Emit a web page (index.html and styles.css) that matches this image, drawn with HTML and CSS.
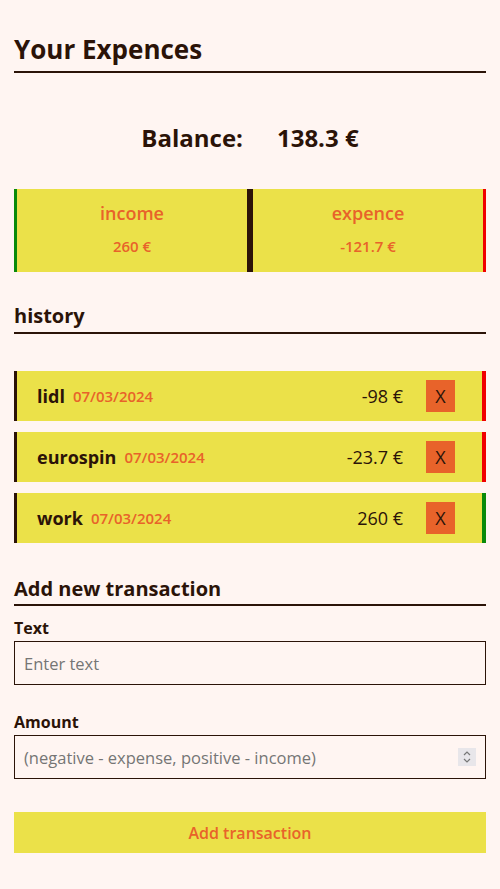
FILE: index.html
```html
<!DOCTYPE html>
<html>
<head>
<meta charset="utf-8">
<link rel="stylesheet" href="styles.css">
</head>
<body>
<div class="app">
  <h1 class="title">Your Expences</h1>
  <div class="balance"><span>Balance:</span><span>138.3 €</span></div>
  <div class="summary">
    <div class="sum sum-income">
      <div class="sum-label">income</div>
      <div class="sum-value">260 €</div>
    </div>
    <div class="sum sum-expence">
      <div class="sum-label">expence</div>
      <div class="sum-value">-121.7 €</div>
    </div>
  </div>
  <h3 class="section">history</h3>
  <ul class="list">
    <li class="item minus">
      <span class="name">lidl</span><span class="date">07/03/2024</span>
      <span class="amount">-98 €</span><button class="del">X</button>
    </li>
    <li class="item minus">
      <span class="name">eurospin</span><span class="date">07/03/2024</span>
      <span class="amount">-23.7 €</span><button class="del">X</button>
    </li>
    <li class="item plus">
      <span class="name">work</span><span class="date">07/03/2024</span>
      <span class="amount">260 €</span><button class="del">X</button>
    </li>
  </ul>
  <h3 class="section add">Add new transaction</h3>
  <form class="form">
    <label class="label">Text</label>
    <input class="field" type="text" placeholder="Enter text">
    <label class="label">Amount</label>
    <div class="field num">
      <span class="ph">(negative - expense, positive - income)</span>
      <span class="spin"><svg width="10" height="16" viewBox="0 0 10 16"><path d="M2 6 L5 3 L8 6 M2 10 L5 13 L8 10" fill="none" stroke="#777" stroke-width="1.2"/></svg></span>
    </div>
    <button class="submit" type="button">Add transaction</button>
  </form>
</div>
</body>
</html>
```
FILE: styles.css
```css
* { box-sizing: border-box; }
body {
  margin: 0;
  background: #fff5f2;
  color: #2b1308;
  font-family: "Open Sans", "Noto Sans", sans-serif;
}
.app { padding: 0 14px 30px; }
.title {
  margin: 0;
  padding-top: 32px;
  font-size: 26px;
  font-weight: 700;
  line-height: 34px;
  border-bottom: 2px solid #2b1308;
  padding-bottom: 5px;
}
.balance {
  display: flex;
  justify-content: center;
  gap: 34px;
  font-size: 24px;
  font-weight: 700;
  margin-top: 50px;
  line-height: 30px;
}
.summary {
  display: flex;
  margin-top: 36px;
  height: 83px;
  background: #ebe149;
  border-left: 3px solid #0a8a0a;
  border-right: 3px solid #f00000;
}
.sum {
  flex: 1;
  display: flex;
  flex-direction: column;
  align-items: center;
  color: #e8632a;
  padding-top: 12px;
}
.sum-income { border-right: 6px solid #2b1308; }
.sum-label { font-size: 18px; font-weight: 600; line-height: 24px; }
.sum-value { font-size: 15px; font-weight: 600; margin-top: 11px; line-height: 20px; }
.section {
  margin: 0;
  font-size: 20px;
  font-weight: 700;
  line-height: 26px;
  border-bottom: 2px solid #2b1308;
  padding-bottom: 3px;
  margin-top: 31px;
}
.list { list-style: none; margin: 37px 0 0; padding: 0; display: flex; flex-direction: column; gap: 11px; }
.item {
  display: flex;
  align-items: center;
  height: 50px;
  background: #ebe149;
  border-left: 3px solid #2b1308;
  padding-left: 20px;
  padding-right: 27px;
}
.item.minus { border-right: 4px solid #f00000; }
.item.plus { border-right: 4px solid #0a8a0a; }
.name { font-size: 18px; font-weight: 700; }
.date { font-size: 15px; font-weight: 600; color: #e8632a; margin-left: 8px; }
.amount { margin-left: auto; font-size: 18px; }
.del {
  margin-left: 23px;
  width: 29px;
  height: 32px;
  border: 0;
  padding: 0;
  background: #e8632a;
  color: #2b1308;
  font-family: inherit;
  font-size: 18px;
}
.section.add { margin-top: 33px; padding-bottom: 2px; }
.form { display: flex; flex-direction: column; }
.label { font-size: 16px; font-weight: 700; margin-top: 11px; line-height: 22px; }
.label + .field { margin-top: 2px; }
.field {
  height: 44px;
  border: 1px solid #2b1308;
  background: #fff5f2;
  padding: 0 9px;
  font-family: inherit;
  font-size: 16.5px;
  color: #2b1308;
  outline: none;
}
.field::placeholder { color: #757575; }
.field + .label { margin-top: 26px; }
.num { display: flex; align-items: center; }
.ph { color: #757575; }
.spin {
  margin-left: auto;
  width: 18px;
  height: 18px;
  background: #e8e6ea;
  display: flex;
  align-items: center;
  justify-content: center;
}
.submit {
  margin-top: 33px;
  height: 41px;
  border: 0;
  background: #ebe149;
  color: #e8632a;
  font-family: inherit;
  font-size: 16px;
  font-weight: 600;
}
```
